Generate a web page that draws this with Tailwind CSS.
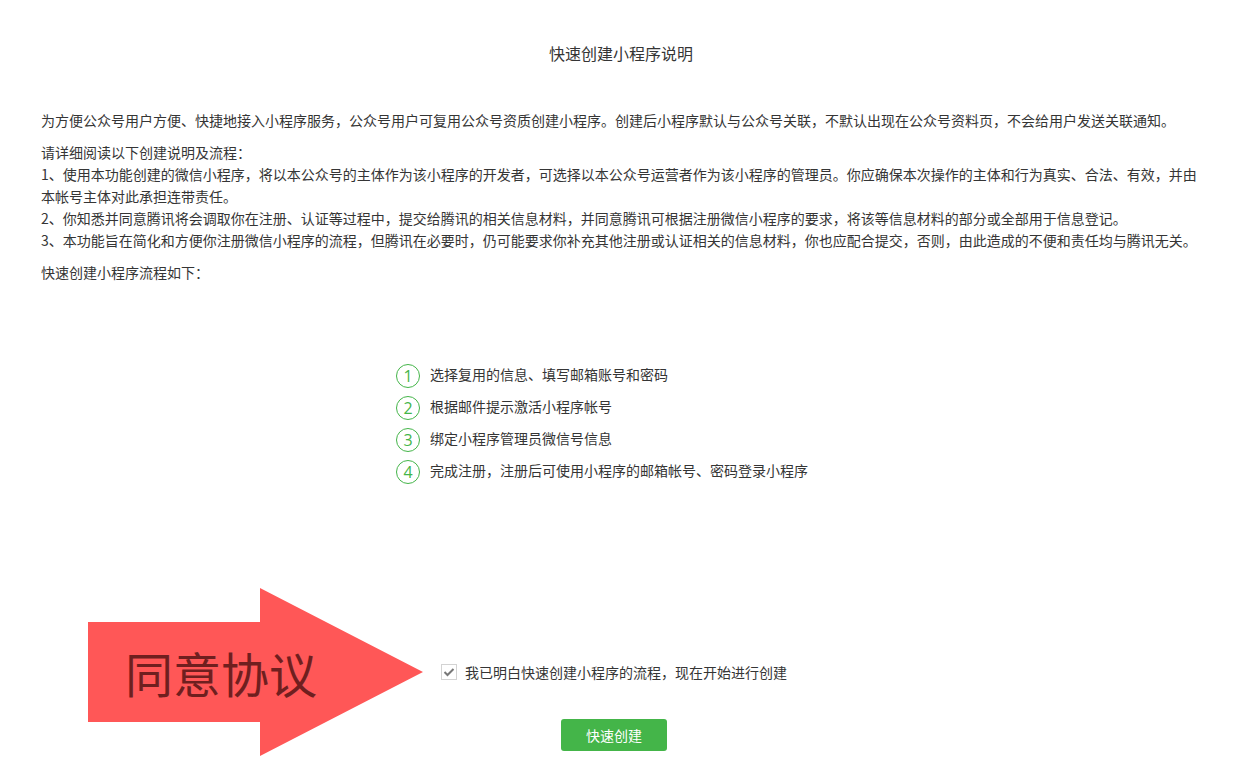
<!doctype html>
<html lang="zh-CN">
<head>
  <meta charset="UTF-8">
  <meta name="viewport" content="width=device-width, initial-scale=1.0">
  <title>快速创建小程序说明</title>
  <script src="https://cdn.jsdelivr.net/npm/@tailwindcss/browser@4"></script>
</head>
<body class="bg-white font-['Noto_Sans_CJK_SC',sans-serif] text-sm leading-[22px] text-[#353535]">
  <main class="pl-[41px] pr-[45px] pt-[41px] pb-7">
    <h1 class="mb-11 text-center text-base leading-6">快速创建小程序说明</h1>

    <!-- 创建说明 -->
    <section class="space-y-[10px]">
      <p>为方便公众号用户方便、快捷地接入小程序服务，公众号用户可复用公众号资质创建小程序。创建后小程序默认与公众号关联，不默认出现在公众号资料页，不会给用户发送关联通知。</p>
      <div>
        <p>请详细阅读以下创建说明及流程：</p>
        <p>1、使用本功能创建的微信小程序，将以本公众号的主体作为该小程序的开发者，可选择以本公众号运营者作为该小程序的管理员。你应确保本次操作的主体和行为真实、合法、有效，并由本帐号主体对此承担连带责任。</p>
        <p>2、你知悉并同意腾讯将会调取你在注册、认证等过程中，提交给腾讯的相关信息材料，并同意腾讯可根据注册微信小程序的要求，将该等信息材料的部分或全部用于信息登记。</p>
        <p>3、本功能旨在简化和方便你注册微信小程序的流程，但腾讯在必要时，仍可能要求你补充其他注册或认证相关的信息材料，你也应配合提交，否则，由此造成的不便和责任均与腾讯无关。</p>
      </div>
      <p>快速创建小程序流程如下：</p>
    </section>

    <div class="flex flex-col items-center pr-[14px]">
      <!-- 流程步骤 -->
      <ol class="mt-[81px] w-full max-w-[436px] space-y-2 leading-5">
        <li class="flex gap-[10px]">
          <span class="flex size-6 items-center justify-center rounded-full border border-[#44b549] font-['Open_Sans'] text-base text-[#44b549]">1</span>
          <span>选择复用的信息、填写邮箱账号和密码</span>
        </li>
        <li class="flex gap-[10px]">
          <span class="flex size-6 items-center justify-center rounded-full border border-[#44b549] font-['Open_Sans'] text-base text-[#44b549]">2</span>
          <span>根据邮件提示激活小程序帐号</span>
        </li>
        <li class="flex gap-[10px]">
          <span class="flex size-6 items-center justify-center rounded-full border border-[#44b549] font-['Open_Sans'] text-base text-[#44b549]">3</span>
          <span>绑定小程序管理员微信号信息</span>
        </li>
        <li class="flex gap-[10px]">
          <span class="flex size-6 items-center justify-center rounded-full border border-[#44b549] font-['Open_Sans'] text-base text-[#44b549]">4</span>
          <span>完成注册，注册后可使用小程序的邮箱帐号、密码登录小程序</span>
        </li>
      </ol>

      <form class="mt-[177px] flex flex-col items-center">
        <div class="relative">
          <!-- 箭头提示 -->
          <div class="absolute right-full top-1/2 mr-[18px] flex h-[168px] w-[336px] -translate-y-1/2 items-center">
            <svg class="absolute inset-0 size-full" viewBox="0 0 336 168" fill="#ff5757" aria-hidden="true">
              <path d="M1 34H173V0L336 84L173 168V134H1Z"/>
            </svg>
            <span class="relative pl-[38px] text-5xl whitespace-nowrap text-[#6f1f1f]">同意协议</span>
          </div>

          <label for="agree" class="flex items-center gap-2">
            <span class="grid size-4">
              <input id="agree" type="checkbox" checked class="peer col-start-1 row-start-1 size-4 appearance-none border border-[#d3d3d3] bg-white">
              <svg class="pointer-events-none invisible col-start-1 row-start-1 size-4 peer-checked:visible" viewBox="0 0 16 16" fill="none" stroke="#787878" stroke-width="2" aria-hidden="true">
                <path d="M3.5 8L6.5 11L12.5 5"/>
              </svg>
            </span>
            <span>我已明白快速创建小程序的流程，现在开始进行创建</span>
          </label>
        </div>

        <button type="submit" class="mt-9 h-8 rounded-[3px] bg-[#44b549] px-[25px] text-white">快速创建</button>
      </form>
    </div>
  </main>

  <script>
    // 未勾选时不允许提交
    const agree = document.getElementById('agree');
    document.querySelector('form').addEventListener('submit', function(e) {
      e.preventDefault();
      if (!agree.checked) {
        agree.focus();
      }
    });
  </script>
</body>
</html>
